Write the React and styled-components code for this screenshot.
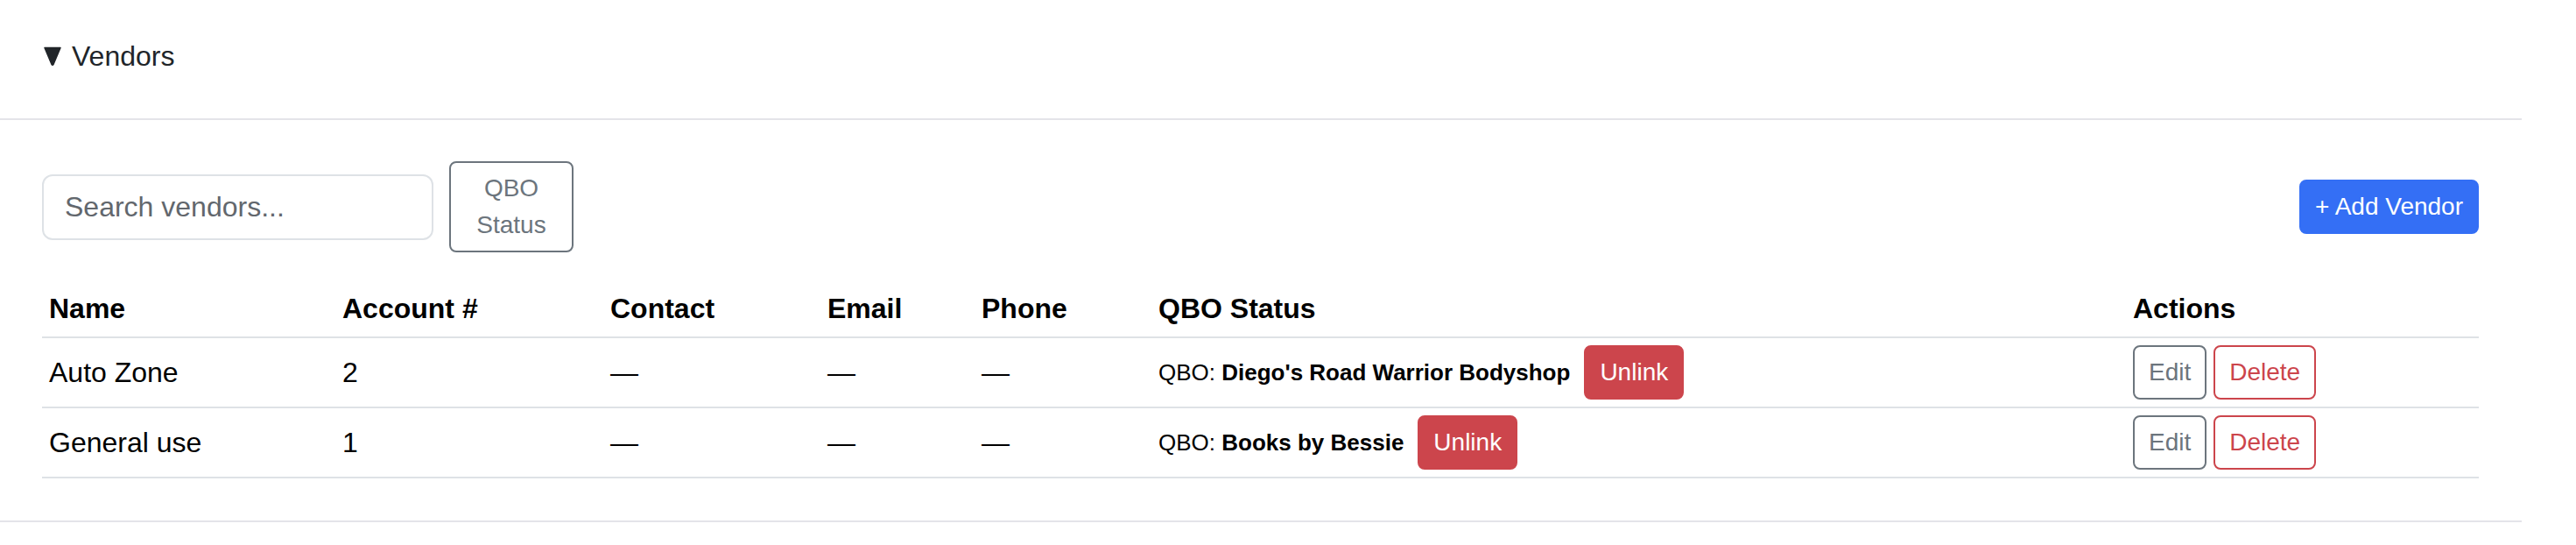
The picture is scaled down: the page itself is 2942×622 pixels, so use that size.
import React from 'react';
import styled, { createGlobalStyle, css } from 'styled-components';

const GlobalStyle = createGlobalStyle`
    html, body {
        margin: 0;
        padding: 0;
        background: #fff;
    }

    body {
        font-family: "Liberation Sans", Arial, sans-serif;
        color: #212529;
    }
`

const Card = styled.details`
    width: 2880px;
    border-bottom: 2px solid #e4e4e9;
`

const Summary = styled.summary`
    display: flex;
    align-items: center;
    gap: 12px;
    padding: 40px 50px 47px;
    border-bottom: 2px solid #e4e4e9;
    font-size: 32px;
    line-height: 48px;
    color: #212529;
    list-style: none;
    cursor: pointer;

    &::-webkit-details-marker {
        display: none;
    }
`

const Body = styled.div`
    padding: 47px 49px 48px 48px;
`

const Toolbar = styled.div`
    display: flex;
    align-items: center;
    margin-bottom: 32px;
`

const Filters = styled.div`
    display: flex;
    align-items: center;
    gap: 18px;
`

const Search = styled.input`
    box-sizing: border-box;
    width: 447px;
    height: 75px;
    padding: 0 24px;
    border: 2px solid #dee2e6;
    border-radius: 12px;
    font-family: inherit;
    font-size: 32px;
    color: #212529;
    outline: none;

    &::placeholder {
        color: #62676d;
    }
`

const variants = {
    primary: css`
        background: #346ff5;
        border-color: #346ff5;
        color: #fff;
    `,
    danger: css`
        background: #cc454c;
        border-color: #cc454c;
        color: #fff;
    `,
    secondaryOutline: css`
        background: #fff;
        border-color: #6c757d;
        color: #6c757d;
    `,
    dangerOutline: css`
        background: #fff;
        border-color: #cc454c;
        color: #cc454c;
    `,
}

const Button = styled.button`
    box-sizing: border-box;
    padding: 8px 16px;
    border: 2px solid transparent;
    border-radius: 8px;
    font-family: inherit;
    font-size: 28px;
    line-height: 42px;
    white-space: nowrap;
    cursor: pointer;
    ${p => variants[p.$variant]}
`

const StatusFilter = styled(Button)`
    width: 142px;
    white-space: normal;
    text-align: center;
`

const AddButton = styled(Button)`
    margin-left: auto;
`

const Table = styled.table`
    width: 100%;
    table-layout: fixed;
    border-collapse: collapse;
    color: #000;
    font-size: 32px;
    line-height: 48px;
`

const Th = styled.th`
    padding: 8px;
    text-align: left;
    font-weight: 700;
    border-bottom: 2px solid #dee2e6;
`

const Td = styled.td`
    padding: 8px;
    vertical-align: middle;
    border-bottom: 2px solid #dee2e6;
`

const Qbo = styled.div`
    display: flex;
    align-items: center;
    gap: 16px;
    font-size: 26px;

    b {
        font-weight: 700;
    }
`

const Actions = styled.div`
    display: flex;
    gap: 8px;
    padding-left: 0;
`

const columns = [
    ['Name', 335],
    ['Account #', 306],
    ['Contact', 248],
    ['Email', 176],
    ['Phone', 202],
    ['QBO Status', 1113],
    ['Actions', 403],
]

const vendors = [
    { name: 'Auto Zone', account: '2', qbo: "Diego's Road Warrior Bodyshop" },
    { name: 'General use', account: '1', qbo: 'Books by Bessie' },
]

const Caret = () => (
    <svg width="20" height="22" viewBox="0 0 20 22">
        <path d="M1 1.5 L19 1.5 L11 20.5 Q10 22 9 20.5 Z" fill="#212529" stroke="#212529" strokeWidth="1.5" strokeLinejoin="round" />
    </svg>
)

export default function App() {
    return (
        <>
            <GlobalStyle />
            <Card open>
                <Summary>
                    <Caret />
                    <span>Vendors</span>
                </Summary>
                <Body>
                    <Toolbar>
                        <Filters>
                            <Search placeholder="Search vendors..." />
                            <StatusFilter $variant="secondaryOutline">QBO Status</StatusFilter>
                        </Filters>
                        <AddButton $variant="primary">+ Add Vendor</AddButton>
                    </Toolbar>
                    <Table>
                        <colgroup>
                            {columns.map(([label, w]) => <col key={label} style={{ width: w }} />)}
                        </colgroup>
                        <thead>
                            <tr>
                                {columns.map(([label]) => <Th key={label}>{label}</Th>)}
                            </tr>
                        </thead>
                        <tbody>
                            {vendors.map(v => (
                                <tr key={v.name}>
                                    <Td>{v.name}</Td>
                                    <Td>{v.account}</Td>
                                    <Td>—</Td>
                                    <Td>—</Td>
                                    <Td>—</Td>
                                    <Td>
                                        <Qbo>
                                            <span>QBO: <b>{v.qbo}</b></span>
                                            <Button $variant="danger">Unlink</Button>
                                        </Qbo>
                                    </Td>
                                    <Td>
                                        <Actions>
                                            <Button $variant="secondaryOutline">Edit</Button>
                                            <Button $variant="dangerOutline">Delete</Button>
                                        </Actions>
                                    </Td>
                                </tr>
                            ))}
                        </tbody>
                    </Table>
                </Body>
            </Card>
        </>
    )
}
